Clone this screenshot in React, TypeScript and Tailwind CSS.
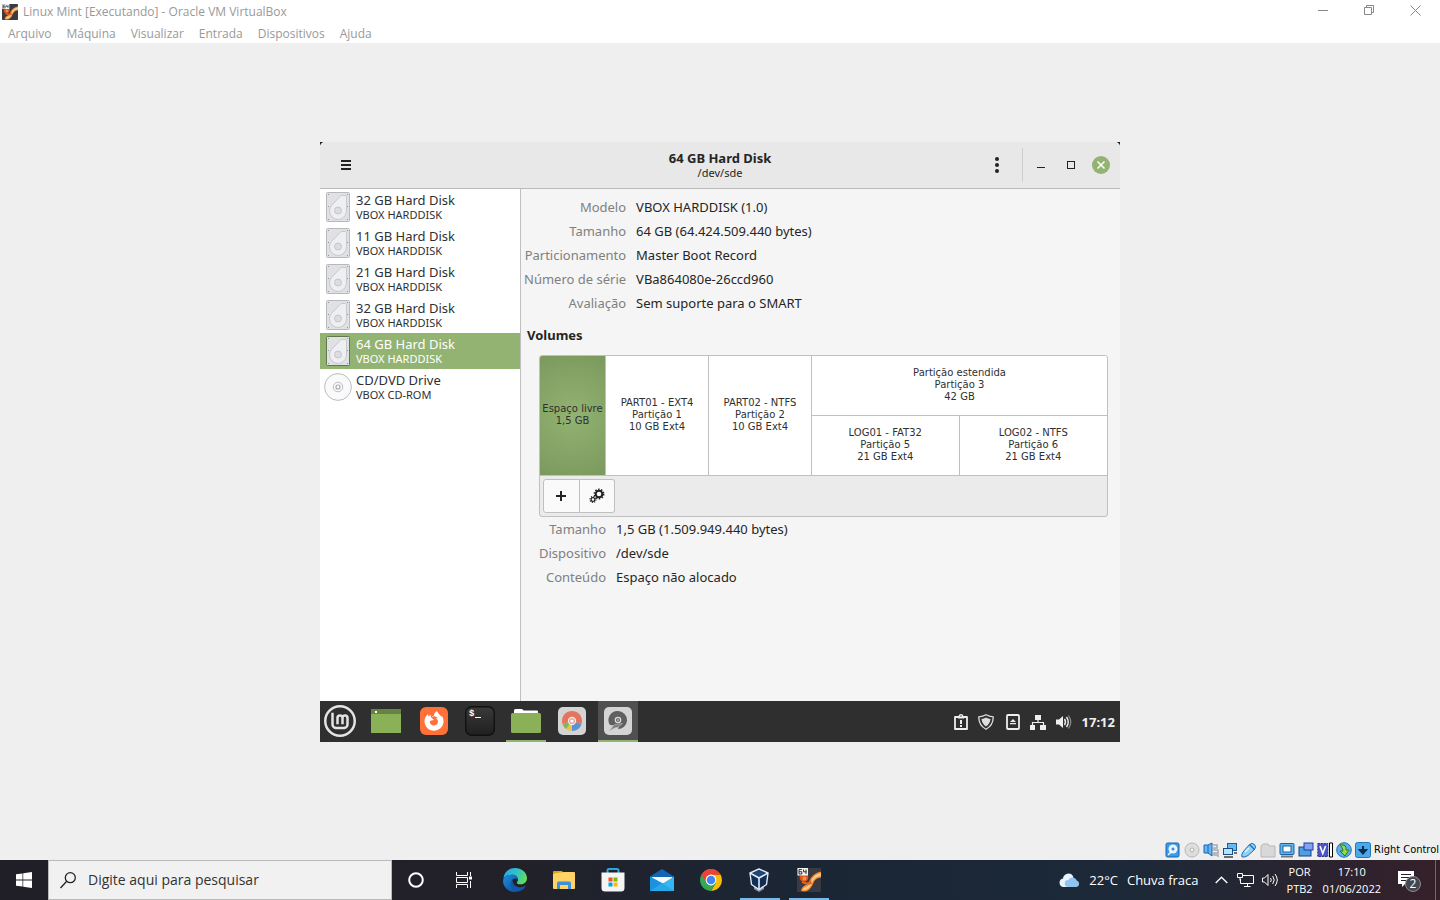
import type { ReactNode } from "react";
import { FaFirefoxBrowser } from "react-icons/fa";
import { SiLinuxmint } from "react-icons/si";

const SEGOE = "font-['Open_Sans','Noto_Sans',sans-serif]";
const UBUNTU = "font-['Noto_Sans','Open_Sans',sans-serif]";
const DEJAVU = "font-['DejaVu_Sans',sans-serif]";
const TAHOMA = "font-['DejaVu_Sans_Condensed','Noto_Sans',sans-serif]";

/* ---------- Host window ---------- */

function VmLogo({ size }: { size: number }) {
  return (
    <svg width={size} height={size} viewBox="0 0 24 24" aria-hidden="true">
      <rect width="24" height="24" rx="1" fill="#3a3b42" />
      <path d="M24 3.500v6q-5 .5-7 4-2 6-6 9-3 1.500-7 .5.500-5 6-6.500 2-2 3.500-6Q17 5 24 3.500z" fill="#f08a35" />
      <path d="M24 5v3q-6 1-8 5-2 6-6 8.500-2 1-4.500.8 1-3.300 5.500-4.300 3-3 4-7Q18 6 24 5z" fill="#fbc986" />
      <path d="M5 12q5 5 9 0l1 4q-5 2-10-1z" fill="#e5651f" />
      <circle cx="7" cy="9.500" r="4.300" fill="#e2531b" />
      <circle cx="7.500" cy="10.500" r="2" fill="#f59042" />
      <rect x="0.500" y="0" width="10.500" height="7.500" fill="#f4f4f4" />
      <path d="M4.800 1.500H2v4.500h2.800V3.700H2M6.500 1.500v2.300h3M9 1.500V6" fill="none" stroke="#333" strokeWidth="1" />
    </svg>
  );
}

function HostTitleBar() {
  return (
    <header className={`bg-white text-[#999] ${SEGOE}`}>
      <div className="flex h-6 items-center justify-between">
        <div className="flex items-center gap-[5px] pl-0.5">
          <VmLogo size={16} />
          <h1 className="text-[12px] leading-4 whitespace-nowrap">Linux Mint [Executando] - Oracle VM VirtualBox</h1>
        </div>
        <div className="flex pr-0.5 pb-1">
          <button aria-label="Minimizar" className="flex h-5 w-[46px] items-center justify-center">
            <svg width="10" height="10" viewBox="0 0 10 10"><path d="M0 5.500h10" stroke="#888" /></svg>
          </button>
          <button aria-label="Restaurar" className="flex h-5 w-[46px] items-center justify-center">
            <svg width="10" height="10" viewBox="0 0 10 10" fill="none" stroke="#888"><path d="M.5 2.500h7v7h-7zM2.500 2.500v-2h7v7h-2" /></svg>
          </button>
          <button aria-label="Fechar" className="flex h-5 w-[46px] items-center justify-center">
            <svg width="11" height="11" viewBox="0 0 11 11"><path d="M.5.5l10 10M10.500.5l-10 10" stroke="#888" /></svg>
          </button>
        </div>
      </div>
      <nav className="flex h-[19px] items-center gap-[15px] pl-2 text-[12px] leading-4">
        {["Arquivo", "Máquina", "Visualizar", "Entrada", "Dispositivos", "Ajuda"].map((m) => (
          <button key={m}>{m}</button>
        ))}
      </nav>
    </header>
  );
}

/* ---------- Disk utility ---------- */

function HardDiskIcon({ active }: { active?: boolean }) {
  return (
    <svg width="28" height="32" viewBox="0 0 28 32" aria-hidden="true">
      <rect x="2.500" y="1.500" width="23" height="29" rx="1" fill="#e0e1e5" stroke={active ? "#5f7a48" : "#b9b9bb"} />
      <path d="M17 4.500h4q1.500 0 1.500 1.500V20a8.500 8.500 0 0 1-17 0q0-3 2-5.500z" fill="#eeeff2" stroke="#c8c9cd" />
      <circle cx="14" cy="19.500" r="3.500" fill="#dcdde1" stroke="#c6c7cb" />
      <path d="M4 3h1v1H4zM23 3h1v1h-1zM4 15h1v1H4zM23 15h1v1h-1zM4 28h1v1H4zM23 28h1v1h-1z" fill="#8f9095" />
    </svg>
  );
}

function DiscIcon() {
  return (
    <svg width="28" height="32" viewBox="0 0 28 32" fill="none" aria-hidden="true">
      <circle cx="14" cy="16" r="13.400" fill="#fafafa" stroke="#bcbcc2" />
      <circle cx="14" cy="16" r="4.800" fill="#f6f6f8" stroke="#bfbfc7" />
      <circle cx="14" cy="16" r="2" fill="#fff" stroke="#aaaab4" strokeWidth="1.200" />
    </svg>
  );
}

const drives = [
  { name: "32 GB Hard Disk", model: "VBOX HARDDISK" },
  { name: "11 GB Hard Disk", model: "VBOX HARDDISK" },
  { name: "21 GB Hard Disk", model: "VBOX HARDDISK" },
  { name: "32 GB Hard Disk", model: "VBOX HARDDISK" },
  { name: "64 GB Hard Disk", model: "VBOX HARDDISK", active: true },
  { name: "CD/DVD Drive", model: "VBOX CD-ROM", optical: true },
];

function DriveList() {
  return (
    <aside className="w-1/4 shrink-0 bg-white">
      <ul>
        {drives.map((d, i) => (
          <li key={i}>
            <button
              aria-current={d.active}
              className={`flex h-9 w-full items-center gap-1 pl-1 text-left ${d.active ? "bg-[#92b372] text-white" : "text-[#303030]"}`}
            >
              {d.optical ? <DiscIcon /> : <HardDiskIcon active={d.active} />}
              <span className="flex flex-col pt-0.5 whitespace-nowrap">
                <span className="text-[13px] leading-[15px]">{d.name}</span>
                <span className="text-[11px] leading-[14px]">{d.model}</span>
              </span>
            </button>
          </li>
        ))}
      </ul>
    </aside>
  );
}

function DetailList({ rows }: { rows: [string, string][] }) {
  return (
    <dl className="grid grid-cols-[max-content_1fr] gap-x-[10px] text-[13px] leading-6 whitespace-nowrap">
      {rows.map(([label, value]) => (
        <div key={label} className="contents">
          <dt className="text-right text-[#808080]">{label}</dt>
          <dd className="text-[#252525]">{value}</dd>
        </div>
      ))}
    </dl>
  );
}

function Partition({ lines, className }: { lines: string[]; className: string }) {
  return (
    <button className={`flex flex-col items-center justify-center border-[#c0c0c0] whitespace-nowrap ${className}`}>
      {lines.map((l) => (
        <span key={l}>{l}</span>
      ))}
    </button>
  );
}

function Volumes() {
  return (
    <div className="mt-2 overflow-hidden rounded-[3px] border border-[#c0c0c0] bg-[#ebebeb]">
      <div className={`grid h-[120px] grid-cols-[66fr_103fr_103fr_295fr] border-b border-[#c0c0c0] bg-white text-[10px] leading-3 text-[#303030] ${DEJAVU}`}>
        <Partition lines={["Espaço livre", "1,5 GB"]} className="border-r bg-[radial-gradient(circle,#92b372,#7b995d)]" />
        <Partition lines={["PART01 - EXT4", "Partição 1", "10 GB Ext4"]} className="border-r" />
        <Partition lines={["PART02 - NTFS", "Partição 2", "10 GB Ext4"]} className="border-r" />
        <div className="grid grid-cols-2 grid-rows-[60fr_59fr]">
          <Partition lines={["Partição estendida", "Partição 3", "42 GB"]} className="col-span-2 border-b" />
          <Partition lines={["LOG01 - FAT32", "Partição 5", "21 GB Ext4"]} className="border-r" />
          <Partition lines={["LOG02 - NTFS", "Partição 6", "21 GB Ext4"]} className="" />
        </div>
      </div>
      <div className="flex p-[3px]">
        <button aria-label="Criar partição" className="flex h-[34px] w-[37px] items-center justify-center rounded-l-[3px] border border-[#c0c0c0] bg-[#fafafa] pr-px">
          <svg width="10" height="10" viewBox="0 0 10 10"><path d="M0 5h10M5 0v10" stroke="#222" strokeWidth="2" /></svg>
        </button>
        <button aria-label="Opções de partição" className="flex h-[34px] w-[35px] items-center justify-center rounded-r-[3px] border border-l-0 border-[#c0c0c0] bg-[#fafafa]">
          <svg width="16" height="16" viewBox="0 0 16 16" fill="none" stroke="#222">
            <circle cx="10" cy="6" r="3.300" strokeWidth="2" />
            <circle cx="10" cy="6" r="4.700" strokeWidth="1.500" strokeDasharray="1.500 1.450" />
            <circle cx="4" cy="11.500" r="1.900" strokeWidth="1.200" />
            <circle cx="4" cy="11.500" r="3" strokeWidth="1.200" strokeDasharray="1.100 1.250" />
          </svg>
        </button>
      </div>
    </div>
  );
}

function DiskUtility() {
  return (
    <section className="flex flex-1 flex-col overflow-hidden bg-[#f5f5f5]">
      <header className="grid h-[47px] grid-cols-[1fr_auto_1fr] items-center border-b border-[#bababa] bg-[#e8e8e8] text-[#252525]">
        <button aria-label="Menu" className="ml-[21px] w-fit">
          <svg width="10" height="10" viewBox="0 0 10 10"><path d="M0 1h10M0 5h10M0 9h10" stroke="#222" strokeWidth="2" /></svg>
        </button>
        <div className="pt-0.5 text-center whitespace-nowrap">
          <h2 className="text-[13px] leading-[15px] font-bold">64 GB Hard Disk</h2>
          <p className="text-[11px] leading-[14px]">/dev/sde</p>
        </div>
        <div className="flex items-center justify-end pr-[10px]">
          <button aria-label="Opções da unidade" className="mr-[23px]">
            <svg width="4" height="16" viewBox="0 0 4 16" fill="#222"><circle cx="2" cy="2" r="2" /><circle cx="2" cy="8" r="2" /><circle cx="2" cy="14" r="2" /></svg>
          </button>
          <span className="mr-[14px] h-[34px] w-px bg-[#cfcfcf]" />
          <div className="flex items-center gap-[21px]">
            <button aria-label="Minimizar janela">
              <svg width="9" height="10" viewBox="0 0 9 10"><path d="M0 7.500h8" stroke="#222" /></svg>
            </button>
            <button aria-label="Maximizar janela">
              <svg width="8" height="8" viewBox="0 0 8 8"><rect x=".5" y=".5" width="7" height="7" fill="none" stroke="#222" /></svg>
            </button>
            <button aria-label="Fechar janela" className="-ml-1">
              <svg width="18" height="18" viewBox="0 0 18 18"><circle cx="9" cy="9" r="9" fill="#92b372" /><path d="M5.500 5.500l7 7M12.500 5.500l-7 7" stroke="#fff" strokeWidth="1.500" /></svg>
            </button>
          </div>
        </div>
      </header>
      <div className="flex flex-1">
        <DriveList />
        <div className="flex-1 border-l border-[#c0c0c0] pt-[6px] pr-3 pl-[3px]">
          <DetailList
            rows={[
              ["Modelo", "VBOX HARDDISK (1.0)"],
              ["Tamanho", "64 GB (64.424.509.440 bytes)"],
              ["Particionamento", "Master Boot Record"],
              ["Número de série", "VBa864080e-26ccd960"],
              ["Avaliação", "Sem suporte para o SMART"],
            ]}
          />
          <h3 className="mt-2 pl-[3px] text-[13px] leading-6 font-bold text-[#252525]">Volumes</h3>
          <div className="pl-[15px]">
            <Volumes />
            <DetailList
              rows={[
                ["Tamanho", "1,5 GB (1.509.949.440 bytes)"],
                ["Dispositivo", "/dev/sde"],
                ["Conteúdo", "Espaço não alocado"],
              ]}
            />
          </div>
        </div>
      </div>
    </section>
  );
}

/* ---------- Mint panel ---------- */

function PanelItem({ label, state = "", children }: { label: string; state?: string; children: ReactNode }) {
  return (
    <button aria-label={label} className={`flex h-[41px] w-10 items-center justify-center border-t border-b-2 border-t-transparent ${state || "border-b-transparent"}`}>
      {children}
    </button>
  );
}

function MintPanel() {
  return (
    <footer className="flex h-[41px] items-center justify-between bg-[#2f2f2f]">
      <div className="flex gap-[6px]">
        <PanelItem label="Menu do Mint">
          <SiLinuxmint size={32} color="#e4e4e4" />
        </PanelItem>
        <PanelItem label="Mostrar área de trabalho">
          <svg width="30" height="24" viewBox="0 0 30 24"><rect width="30" height="24" fill="#8bb158" /><rect width="30" height="5" fill="#668344" /><rect x="4" y="2" width="2" height="2" fill="#fff" /></svg>
        </PanelItem>
        <div className="ml-0.5 flex gap-[6px]">
          <PanelItem label="Firefox">
            <span className="flex h-7 w-7 items-center justify-center rounded-md bg-[#ff7139]">
              <FaFirefoxBrowser size={20} color="#fff" />
            </span>
          </PanelItem>
          <PanelItem label="Terminal">
            <svg width="30" height="30" viewBox="0 0 30 30">
              <defs><linearGradient id="term" x2="0" y2="1"><stop stopColor="#3a3a3a" /><stop offset="1" stopColor="#1f1f1f" /></linearGradient></defs>
              <rect x=".7" y=".7" width="28.600" height="28.600" rx="6" fill="url(#term)" stroke="#111" strokeWidth="1.400" />
              <text x="4" y="10" fill="#fff" fontSize="9" fontWeight="bold" fontFamily="Liberation Mono, monospace">$</text>
              <path d="M10 11.500h6" stroke="#fff" />
            </svg>
          </PanelItem>
          <PanelItem label="Arquivos" state="border-b-[#92b372]">
            <svg width="30" height="24" viewBox="0 0 30 24">
              <path d="M3 4V1.500Q3 0 4.500 0h6Q12 0 12.500 1.500H26q1 0 1 1V6H3z" fill="#fff" />
              <rect y="4" width="30" height="20" rx="1.500" fill="#8bb158" />
            </svg>
          </PanelItem>
          <PanelItem label="Analisador de disco">
            <svg width="30" height="30" viewBox="0 0 30 30">
              <rect x="1" y="1" width="28" height="28" rx="5" fill="#d4d4d4" />
              <path d="M15 15L5.500 18A10 10 0 1 1 24.500 18z" fill="#e5745f" />
              <path d="M15 15l9.500 3A10 10 0 0 1 15 25z" fill="#5b93d3" />
              <path d="M15 15v10A10 10 0 0 1 9 23z" fill="#eac44b" />
              <path d="M15 15l-6 8a10 10 0 0 1-3.500-5z" fill="#8bb158" />
              <circle cx="15" cy="15" r="3.600" fill="#e5a99d" stroke="#eee" strokeWidth="1.100" />
              <circle cx="15" cy="15" r="1.600" fill="#fff" />
            </svg>
          </PanelItem>
          <PanelItem label="Discos" state="border-b-[#92b372] bg-[#505050]">
            <svg width="30" height="30" viewBox="0 0 30 30">
              <rect x="1" y="1" width="28" height="28" rx="5" fill="#d4d4d4" />
              <path d="M15 5a9 9 0 0 1 9 9v1a9 9 0 0 1-9 8l1-3-9-1A9 9 0 0 1 15 5z" fill="#606060" />
              <path d="M6.500 24.500l5-6 8-1-4 3.500-4 1z" fill="#808080" stroke="#b8b8b8" strokeWidth=".6" />
              <circle cx="15" cy="14" r="2.700" fill="#666" stroke="#ddd" strokeWidth="1.200" />
              <circle cx="15" cy="14" r=".8" fill="#eee" />
            </svg>
          </PanelItem>
        </div>
      </div>
      <div className="flex items-center gap-[10px] pt-0.5 pr-[5px] text-[#f0f0f0]">
        <svg width="14" height="16" viewBox="0 0 14 16"><path d="M1 3h12v12H1z" fill="none" stroke="#eee" strokeWidth="1.800" strokeLinejoin="round" /><path d="M4.500 3V2Q5 0 7 0t2.500 2v1H10v1.500H4V3zM6 6h2v4H6zM6 11h2v2H6z" fill="#eee" /><path d="M6.300 1.500h1.400v1H6.300z" fill="#2f2f2f" /></svg>
        <svg width="16" height="16" viewBox="0 0 16 16"><path d="M8 .8Q11 2.600 15.200 2.800 15.500 11 8 15.200.5 11 .8 2.800 5 2.600 8 .8z" fill="none" stroke="#ddd" strokeWidth="1.300" /><path d="M8 3.500q2 1.200 4.500 1.400Q12.200 9.500 8 12.500 3.800 9.500 3.500 4.900 6 4.700 8 3.500z" fill="#ddd" /></svg>
        <svg width="14" height="16" viewBox="0 0 14 16" className="ml-0.5"><rect x="1" y="1" width="12" height="14" rx="1" fill="none" stroke="#eee" strokeWidth="1.800" /><path d="M7 5l3 3H4zM4 9h6v1.200H4z" fill="#eee" /></svg>
        <svg width="16" height="16" viewBox="0 0 16 16"><path d="M5 1h6v5H5zM0 11h5v5H0zM10 11h6v5h-6z" fill="#eee" /><path d="M8 6v3M2.500 11V8.500h11V11" fill="none" stroke="#eee" strokeWidth="1.200" /></svg>
        <svg width="16" height="16" viewBox="0 0 16 16" fill="none"><path d="M0 5.500h3L7 2v12l-4-3.500H0z" fill="#eee" /><path d="M8.500 5q2 3 0 6M10.500 3q3.500 5 0 10" stroke="#eee" strokeWidth="1.400" /><path d="M12.500 1.500q4.500 6.500 0 13" stroke="#888" strokeWidth="1.300" /></svg>
        <time className="text-[13px] leading-4 font-bold">17:12</time>
      </div>
    </footer>
  );
}

/* ---------- Host status bar ---------- */

const statusIcons: ReactNode[] = [
  <g key="hd"><rect x="1" y="1" width="13" height="14" rx="1.500" fill="#3c9ae6" stroke="#1764b4" /><circle cx="8" cy="7" r="4.500" fill="#e7f3fd" /><circle cx="8" cy="7" r="1.500" fill="#3c8edb" /><path d="M3 13l4-4" stroke="#fff" strokeWidth="1.500" /></g>,
  <g key="cd"><circle cx="8" cy="8" r="7" fill="#dedede" stroke="#b8b8b8" /><circle cx="8" cy="8" r="2" fill="#f2f2f2" stroke="#b0b0b0" /></g>,
  <g key="audio"><path d="M1 3h4l4-2v13l-4-3H1z" fill="#62b7f0" stroke="#1764b4" /><path d="M5 3v8" stroke="#1764b4" /><path d="M10 3h4v3h-3v2h4v3h-4v2h4v2" fill="none" stroke="#aaa" strokeWidth="1.500" /></g>,
  <g key="net"><rect x="5.500" y="1.500" width="9" height="7" fill="#65b9ef" stroke="#1a5e9f" /><rect x="1.500" y="6.500" width="9" height="6" fill="#b4e4fb" stroke="#1a4e84" /><path d="M2 15h9M12 11h3" stroke="#444" strokeWidth="1.500" /></g>,
  <g key="usb"><path d="M2 10l6-7q3-3 5.500-.5T13 8l-6 5.500Q4 15.500 1 15q-1-2 1-5z" fill="#8fd0f7" stroke="#1e6db5" /><path d="M8.500 2.500l5 5" stroke="#1e6db5" strokeWidth="1.200" /><path d="M4 10l4-4" stroke="#e6f6ff" strokeWidth="1.500" /></g>,
  <g key="folder"><path d="M1 4l2-2h5l1 2h6v11H1z" fill="#d8d8d8" stroke="#b7b7b7" /></g>,
  <g key="display"><rect x="1" y="1.500" width="14" height="11" rx="1" fill="#5bb8f0" stroke="#1a5fa8" /><rect x="4" y="4" width="8" height="6" fill="#fff" stroke="#245d92" /><path d="M2 14.500h12" stroke="#777" strokeWidth="2" /></g>,
  <g key="rec"><rect x="1" y="5" width="12" height="9" fill="#4d9fe4" stroke="#183f86" /><rect x="6" y="1" width="9" height="7" fill="#7fa3f3" stroke="#2838a0" /></g>,
  <g key="cpu"><rect x=".8" y="1.500" width="10" height="13" fill="#4b56c4" stroke="#242c84" strokeDasharray="2 1" /><path d="M3 4l2.800 7.500L8.600 4" fill="none" stroke="#fff" strokeWidth="1.600" /><path d="M12.500 1h3v14h-3z" fill="#fff" stroke="#000" /></g>,
  <g key="mouse"><circle cx="8" cy="8" r="7.300" fill="#58b1ed" stroke="#2172b5" /><path d="M4 3q7-1 6 5h3l-4 6-5-5h3q0-3-3-6z" fill="#8fdc48" stroke="#367225" /></g>,
  <g key="key"><rect x=".5" y=".5" width="15" height="15" rx="2" fill="#4da8e8" stroke="#1f76bb" /><path d="M8 4v4M5 8l3 3.500L11 8z" fill="#102d55" stroke="#102d55" strokeWidth="2" /></g>,
];

function StatusIcons() {
  return (
    <div className="flex items-center gap-[3px]">
      {statusIcons.map((icon, i) => (
        <svg key={i} width="16" height="16" viewBox="0 0 16 16" aria-hidden="true">{icon}</svg>
      ))}
    </div>
  );
}

/* ---------- Windows taskbar ---------- */

function TaskButton({ label, running, wide, children }: { label: string; running?: boolean; wide?: boolean; children: ReactNode }) {
  return (
    <button aria-label={label} className={`flex h-10 flex-col items-center ${wide ? "w-[49px]" : "w-12"}`}>
      <span className="flex flex-1 items-center justify-center">{children}</span>
      <span className={`-mt-0.5 h-0.5 w-10 ${running ? "bg-[#76b9ed]" : ""}`} />
    </button>
  );
}

function Taskbar() {
  return (
    <footer className={`flex h-10 items-center justify-between bg-[linear-gradient(90deg,#201f27_0%,#222129_35%,#1b2635_55%,#1c2938_78%,#292430_90%,#352029_100%)] text-white ${SEGOE}`}>
      <div className="flex items-center">
        <button aria-label="Iniciar" className="flex h-10 w-12 items-center justify-center">
          <svg width="16" height="16" viewBox="0 0 16 16" fill="#fff"><path d="M0 2.300L6.500 1.400v6.200H0zM7.200 1.300L16 0v7.600H7.200zM0 8.400h6.500v6.200L0 13.700zM7.200 8.400H16V16l-8.800-1.300z" /></svg>
        </button>
        <label className="flex h-10 w-[344px] items-center gap-3 border border-[#b9b9b9] bg-[#f1f1f1] pl-[11px]">
          <svg width="16" height="17" viewBox="0 0 16 17" fill="none" stroke="#222" strokeWidth="1.300"><circle cx="10.300" cy="5.700" r="5" /><path d="M6.700 9.300L.5 16" /></svg>
          <input aria-label="Pesquisar" placeholder="Digite aqui para pesquisar" className="min-w-0 flex-1 bg-transparent text-[14px] leading-5 outline-none placeholder:text-[#333]" />
        </label>
        <TaskButton label="Cortana">
          <svg width="16" height="16" viewBox="0 0 16 16"><circle cx="8" cy="8" r="6.800" fill="none" stroke="#fff" strokeWidth="2" /></svg>
        </TaskButton>
        <TaskButton label="Visão de tarefas">
          <svg width="16" height="16" viewBox="0 0 16 16" fill="none" stroke="#fff"><path d="M.5 0v3.500h11V0M.5 16v-3.500h11V16M.5 5.500h11v5H.5zM14.500 0v4M14.500 9v7" /><path d="M13 4.500h3v3h-3z" fill="#fff" stroke="none" /></svg>
        </TaskButton>
        <div className="ml-0.5 flex">
          <TaskButton wide label="Microsoft Edge">
            <svg width="24" height="24" viewBox="0 0 24 24">
              <defs>
                <linearGradient id="edgeTop" x1="0" x2="1" y1=".2" y2=".5"><stop stopColor="#2aa7e4" /><stop offset=".55" stopColor="#2fc4c8" /><stop offset="1" stopColor="#66dd5b" /></linearGradient>
                <linearGradient id="edgeLow" x2="1" y2="1"><stop stopColor="#1b8fe0" /><stop offset="1" stopColor="#0c4a9c" /></linearGradient>
              </defs>
              <path d="M.3 10.500C1.200 4 6 0 12 0c7.500 0 12 5.400 12 10 0 4-3 6.300-6.500 6.300-3 0-4-1.100-3.700-1.800.4-.8 1.200-1.300 1.200-3C15 9 12.500 6.700 9 6.700 4.500 6.700 1.500 9 .3 10.500z" fill="url(#edgeTop)" />
              <path d="M.2 11.500C1 8.500 4.500 6.700 8.500 6.700c4 0 6.500 2.300 6.500 4.800 0 0-1.500-1.500-3.500-1-2.500.6-3.300 3-3.300 5 0 4 3.400 7.500 7.600 8C6 26 .2 19 0 13z" fill="url(#edgeLow)" />
              <path d="M9.500 11.500c-2.800 2.300-2.500 7.500 1 10.300 4 3.200 9.200 1.200 11.700-3 .3-.6-.2-1-.8-.6-4 2.200-11.800 1.300-11.900-6.700z" fill="#1457a8" />
            </svg>
          </TaskButton>
          <TaskButton wide label="Explorador de Arquivos">
            <svg width="22" height="18" viewBox="0 0 22 18"><path d="M0 1q0-1 1-1h8l2 2.500H0z" fill="#e5a00d" /><path d="M0 2.500L11 1h10q1 0 1 1v15q0 1-1 1H1q-1 0-1-1z" fill="#fcd364" /><path d="M4 18v-6q0-1.500 1.500-1.500h11Q18 10.500 18 12v6h-3v-4H7v4z" fill="#3f90d5" /></svg>
          </TaskButton>
          <TaskButton wide label="Microsoft Store">
            <svg width="24" height="24" viewBox="0 0 24 24"><path d="M6.500 6V2.500q0-1.500 1.500-1.500h8q1.500 0 1.500 1.500V6" fill="none" stroke="#28a8e0" strokeWidth="2" /><path d="M.5 4.500h23V20q0 3.500-3.500 3.500H4Q.5 23.500.5 20z" fill="#f4f4f4" /><path d="M7.500 9.500h4v4h-4z" fill="#f25022" /><path d="M12.500 9.500h4v4h-4z" fill="#7fba00" /><path d="M7.500 14.500h4v4h-4z" fill="#00a4ef" /><path d="M12.500 14.500h4v4h-4z" fill="#ffb900" /></svg>
          </TaskButton>
          <TaskButton wide label="Email">
            <svg width="24" height="24" viewBox="0 0 24 24"><path d="M0 8.500L12 1l12 7.500V18H0z" fill="#1066b4" /><path d="M2 9h20v5l-10 3L2 14z" fill="#f7f7f7" /><path d="M24 8.500V23H0l12-7z" fill="#35b7f1" /><path d="M0 8.500V23h4l10-7z" fill="#1b92df" /><path d="M0 23h24L12 15z" fill="#28a7e9" /></svg>
          </TaskButton>
          <TaskButton wide label="Google Chrome">
            <svg width="24" height="24" viewBox="0 0 24 24"><path d="M12 12L2.500 6.500A11 11 0 0 1 21.500 6.500H12z" fill="#ea4335" /><path d="M12 12l4.800 2.700L12 23A11 11 0 0 0 21.500 6.500H12z" fill="#fbbc05" /><path d="M2.500 6.500A11 11 0 0 0 12 23l4.800-8.300L12 12z" fill="#34a853" /><path d="M12 6.500h9.500A11 11 0 0 0 2.500 6.500l4.700 8.200z" fill="#ea4335" /><circle cx="12" cy="12" r="5.400" fill="#fff" /><circle cx="12" cy="12" r="4.300" fill="#4285f4" /></svg>
          </TaskButton>
          <TaskButton wide running label="Oracle VM VirtualBox">
            <svg width="24" height="24" viewBox="1 0 24 24"><path d="M7 18.500h10v2.500l-5 3-5-3z" fill="#8d98ad" /><path d="M12 1l9 4-1.500 11.500-7.500 5-7.500-5L3 5z" fill="#102d55" stroke="#e3eaf4" strokeWidth="1.400" strokeLinejoin="round" /><path d="M5 5.500l7-3.500 7 3.500-7 4z" fill="#1e467a" /><path d="M3 5l9 5 9-5M12 10v11.500" stroke="#e3eaf4" strokeWidth="1.600" fill="none" /></svg>
          </TaskButton>
          <TaskButton wide running label="Linux Mint">
            <VmLogo size={24} />
          </TaskButton>
        </div>
      </div>
      <div className="flex h-10 items-center whitespace-nowrap">
        <button className="flex items-center gap-[9px] text-[13px] leading-5">
          <svg width="21" height="16" viewBox="0 0 21 16"><path d="M8 15H4.500A4.300 4.300 0 0 1 4 6.500 5.500 5.500 0 0 1 14 4l2 10z" fill="#e9f3fc" /><path d="M9 15a3.500 3.500 0 0 1 .5-7 4.500 4.500 0 0 1 8.300.6A3.300 3.300 0 0 1 17.500 15z" fill="#8fc4f0" /></svg>
          <span>22°C</span>
          <span>Chuva fraca</span>
        </button>
        <button aria-label="Mostrar ícones ocultos" className="ml-4">
          <svg width="13" height="8" viewBox="0 0 13 8"><path d="M.7 7L6.500 1.200 12.300 7" fill="none" stroke="#fff" strokeWidth="1.300" /></svg>
        </button>
        <button aria-label="Rede" className="ml-[9px]">
          <svg width="17" height="14" viewBox="0 0 17 14" fill="none" stroke="#fff"><path d="M5 2.500h11.500v8H3.500V6M10.500 10.500v3M7 13.500h6.500M.5.5h5v4h-5zM3 4.500v3" /></svg>
        </button>
        <button aria-label="Volume" className="ml-2">
          <svg width="17" height="14" viewBox="0 0 17 14" fill="none" stroke="#fff"><path d="M.5 5v4h2l3.500 3.500v-11L2.500 5zM8.500 5q1.500 2 0 4M10.700 3q3 4 0 8M13 1q4.500 6 0 12" /></svg>
        </button>
        <button className="ml-2 flex flex-col items-center text-[11px] leading-[17px]">
          <span>POR</span>
          <span>PTB2</span>
        </button>
        <button className="ml-[10px] flex flex-col items-center text-[11px] leading-[17px]">
          <span>17:10</span>
          <span>01/06/2022</span>
        </button>
        <button aria-label="2 notificações" className="relative ml-4 mr-[14px] h-6 w-6">
          <svg width="24" height="24" viewBox="0 0 24 24"><path d="M1 3h16v13H8l-3 3v-3H1z" fill="#fff" /><path d="M4 6.500h10M4 9.500h10M4 12.500h6" stroke="#222" /><circle cx="16" cy="16" r="7.500" fill="#45474d" stroke="#8b8b90" /></svg>
          <span className="absolute top-[9px] left-[9px] w-[14px] text-center text-[12px] leading-[14px]">2</span>
        </button>
        <span className="mr-1 h-10 w-px bg-[#6f6870]" />
      </div>
    </footer>
  );
}

export default function App() {
  return (
    <div className="flex min-h-screen flex-col bg-[#efefef]">
      <HostTitleBar />
      <main className="flex flex-1 items-center justify-center">
        <div className={`flex min-h-[600px] w-full max-w-[800px] flex-col bg-[#1c1c1c] ${UBUNTU}`}>
          <div className="flex flex-1 flex-col overflow-hidden rounded-t-[5px]">
            <DiskUtility />
          </div>
          <MintPanel />
        </div>
      </main>
      <div className={`flex h-5 items-center justify-end gap-[3px] pr-px text-[11px] leading-4 text-black ${TAHOMA}`}>
        <StatusIcons />
        <span>Right Control</span>
      </div>
      <Taskbar />
    </div>
  );
}
